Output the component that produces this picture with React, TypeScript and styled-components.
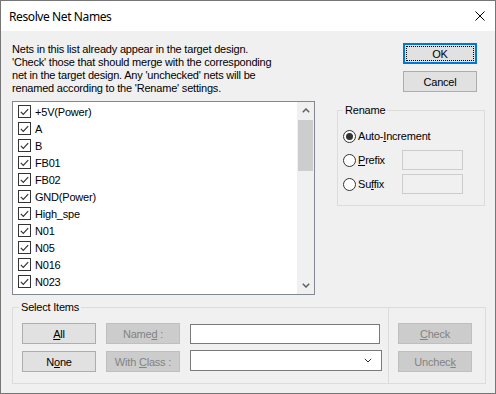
import React from "react";
import styled, { createGlobalStyle } from "styled-components";

const GlobalStyle = createGlobalStyle`
  html, body { margin: 0; padding: 0; background: #f0f0f0; }
  body { font-family: "Liberation Sans", Arial, sans-serif; font-size: 11px; color: #000; }
  * { box-sizing: border-box; }
`;

const Window = styled.div`
  width: 496px;
  height: 394px;
  border: 1px solid #767676;
  display: flex;
  flex-direction: column;
  background: #f0f0f0;
`;

const TitleBar = styled.div`
  height: 30px;
  flex: none;
  background: #fff;
  display: flex;
  align-items: center;
  justify-content: space-between;
  padding: 0 10px 0 8px;
`;

const Title = styled.span`
  font-family: "Noto Sans", "Segoe UI", sans-serif;
  font-size: 12px;
  letter-spacing: -0.4px;
  color: #000;
`;

const Body = styled.div`
  flex: 1;
  display: flex;
  flex-direction: column;
  padding: 12px 9px 9px 11px;
  letter-spacing: -0.2px;
`;

const TopRow = styled.div`
  display: flex;
`;

const LeftCol = styled.div`
  width: 303px;
  flex: none;
  display: flex;
  flex-direction: column;
`;

const Description = styled.p`
  margin: 0;
  line-height: 13px;
`;

const ListBox = styled.div`
  margin-top: 6px;
  height: 194px;
  border: 1px solid #828790;
  background: #fff;
  display: flex;
`;

const Items = styled.div`
  flex: 1;
  padding-top: 1px;
  overflow: hidden;
`;

const Item = styled.div`
  height: 17px;
  display: flex;
  align-items: center;
  gap: 4px;
  padding-left: 5px;
  white-space: nowrap;
`;

const CheckBox = styled.span`
  width: 13px;
  height: 13px;
  flex: none;
  border: 1px solid #333;
  background: #fff;
  display: flex;
  align-items: center;
  justify-content: center;
`;

const ScrollBar = styled.div`
  width: 17px;
  flex: none;
  background: #f0f0f0;
  display: flex;
  flex-direction: column;
`;

const ScrollArrow = styled.div`
  height: 17px;
  flex: none;
  display: flex;
  align-items: center;
  justify-content: center;
`;

const Thumb = styled.div`
  height: 51px;
  margin: 1px 1px 0;
  background: #cdcdcd;
`;

const Track = styled.div`
  flex: 1;
`;

const RightCol = styled.div`
  flex: 1;
  display: flex;
  flex-direction: column;
`;

const ButtonStack = styled.div`
  align-self: flex-end;
  margin-right: 9px;
  display: flex;
  flex-direction: column;
  gap: 7px;
`;

const PushButton = styled.button<{ $default?: boolean }>`
  width: 74px;
  height: 21px;
  padding: 0;
  font: inherit;
  letter-spacing: inherit;
  color: #000;
  background: #e1e1e1;
  border: ${(p) => (p.$default ? "2px solid #0078d7" : "1px solid #adadad")};
  outline: ${(p) => (p.$default ? "1px dotted #000" : "none")};
  outline-offset: -4px;
  display: flex;
  align-items: center;
  justify-content: center;
  &:disabled {
    background: #cccccc;
    border-color: #bfbfbf;
    color: #838383;
  }
`;

const GroupBox = styled.div<{ $height: number }>`
  position: relative;
  height: ${(p) => p.$height}px;
  border: 1px solid #dcdcdc;
`;

const GroupLabel = styled.span<{ $left: number }>`
  position: absolute;
  top: -7px;
  left: ${(p) => p.$left}px;
  padding: 0 2px;
  line-height: 13px;
  background: #f0f0f0;
`;

const RenameBox = styled(GroupBox)`
  margin: 18px 1px 0 22px;
  padding: 18px 0 0 5px;
  display: flex;
  flex-direction: column;
`;

const RadioRow = styled.div<{ $h: number; $top: number }>`
  height: ${(p) => p.$h}px;
  margin-top: ${(p) => p.$top}px;
  display: grid;
  grid-template-columns: 59px 61px;
  align-items: center;
`;

const RadioLabel = styled.label`
  display: flex;
  align-items: center;
  gap: 2px;
  white-space: nowrap;
`;

const Radio = styled.span<{ $on?: boolean }>`
  width: 13px;
  height: 13px;
  flex: none;
  border-radius: 50%;
  border: 1px solid #333;
  background: #fff;
  display: flex;
  align-items: center;
  justify-content: center;
  &::after {
    content: "";
    width: 7px;
    height: 7px;
    border-radius: 50%;
    background: ${(p) => (p.$on ? "#333" : "transparent")};
  }
`;

const DisabledField = styled.div`
  height: 20px;
  border: 1px solid #cccccc;
  background: #f0f0f0;
`;

const SelectBox = styled(GroupBox)`
  margin-top: 12px;
  display: flex;
`;

const SelectLeft = styled.div`
  flex: 1;
  padding: 15px 0 0 9px;
  display: grid;
  grid-template-columns: 74px 74px 192px;
  grid-template-rows: 21px 21px;
  column-gap: 10px;
  row-gap: 7px;
  align-content: start;
`;

const SelectRight = styled.div`
  width: 97px;
  border-left: 1px solid #dcdcdc;
  padding: 15px 0 0 9px;
  display: grid;
  grid-template-rows: 21px 21px;
  row-gap: 7px;
  align-content: start;
`;

const TextInput = styled.div`
  width: 190px;
  height: 20px;
  align-self: end;
  border: 1px solid #7a7a7a;
  background: #fff;
`;

const Combo = styled.div`
  width: 192px;
  height: 21px;
  margin-top: -1px;
  border: 1px solid #7a7a7a;
  background: #fff;
  display: flex;
  align-items: center;
  justify-content: flex-end;
  padding-right: 9px;
`;

const nets = [
  "+5V(Power)",
  "A",
  "B",
  "FB01",
  "FB02",
  "GND(Power)",
  "High_spe",
  "N01",
  "N05",
  "N016",
  "N023",
];

const CheckMark = () => (
  <svg width="9" height="8" viewBox="0 0 9 8">
    <polyline points="0.8,3.8 3.3,6.3 8.2,1.2" fill="none" stroke="#333" strokeWidth="1.2" />
  </svg>
);

const Chevron = ({ up, color, w }: { up?: boolean; color: string; w: number }) => (
  <svg width="8" height="5" viewBox="0 0 8 5">
    <polyline
      points={up ? "0.8,4.2 4,1 7.2,4.2" : "0.8,0.8 4,4 7.2,0.8"}
      fill="none"
      stroke={color}
      strokeWidth={w}
    />
  </svg>
);

export default function App() {
  return (
    <>
      <GlobalStyle />
      <Window>
        <TitleBar>
          <Title>Resolve Net Names</Title>
          <svg width="10" height="10" viewBox="0 0 10 10">
            <path d="M0.5 0.5 L9.5 9.5 M9.5 0.5 L0.5 9.5" stroke="#000" strokeWidth="1" />
          </svg>
        </TitleBar>
        <Body>
          <TopRow>
            <LeftCol>
              <Description>
                Nets in this list already appear in the target design.
                <br />
                'Check' those that should merge with the corresponding
                <br />
                net in the target design. Any 'unchecked' nets will be
                <br />
                renamed according to the 'Rename' settings.
              </Description>
              <ListBox>
                <Items>
                  {nets.map((n) => (
                    <Item key={n}>
                      <CheckBox>
                        <CheckMark />
                      </CheckBox>
                      {n}
                    </Item>
                  ))}
                </Items>
                <ScrollBar>
                  <ScrollArrow>
                    <Chevron up color="#606060" w={1.5} />
                  </ScrollArrow>
                  <Thumb />
                  <Track />
                  <ScrollArrow>
                    <Chevron color="#606060" w={1.5} />
                  </ScrollArrow>
                </ScrollBar>
              </ListBox>
            </LeftCol>
            <RightCol>
              <ButtonStack>
                <PushButton $default>OK</PushButton>
                <PushButton>Cancel</PushButton>
              </ButtonStack>
              <RenameBox $height={96}>
                <GroupLabel $left={5}>Rename</GroupLabel>
                <RadioRow $h={14} $top={0}>
                  <RadioLabel>
                    <Radio $on />
                    <span>
                      Auto-<u>I</u>ncrement
                    </span>
                  </RadioLabel>
                </RadioRow>
                <RadioRow $h={20} $top={7}>
                  <RadioLabel>
                    <Radio />
                    <span>
                      <u>P</u>refix
                    </span>
                  </RadioLabel>
                  <DisabledField />
                </RadioRow>
                <RadioRow $h={20} $top={4}>
                  <RadioLabel>
                    <Radio />
                    <span>
                      Su<u>f</u>fix
                    </span>
                  </RadioLabel>
                  <DisabledField />
                </RadioRow>
              </RenameBox>
            </RightCol>
          </TopRow>
          <SelectBox $height={77}>
            <GroupLabel $left={6}>Select Items</GroupLabel>
            <SelectLeft>
              <PushButton>
                <span>
                  <u>A</u>ll
                </span>
              </PushButton>
              <PushButton disabled>
                <span>
                  Name<u>d</u> :
                </span>
              </PushButton>
              <TextInput />
              <PushButton>
                <span>
                  N<u>o</u>ne
                </span>
              </PushButton>
              <PushButton disabled>
                <span>
                  With <u>C</u>lass :
                </span>
              </PushButton>
              <Combo>
                <Chevron color="#333" w={1} />
              </Combo>
            </SelectLeft>
            <SelectRight>
              <PushButton disabled>
                <span>
                  <u>C</u>heck
                </span>
              </PushButton>
              <PushButton disabled>
                <span>
                  Unchec<u>k</u>
                </span>
              </PushButton>
            </SelectRight>
          </SelectBox>
        </Body>
      </Window>
    </>
  );
}
